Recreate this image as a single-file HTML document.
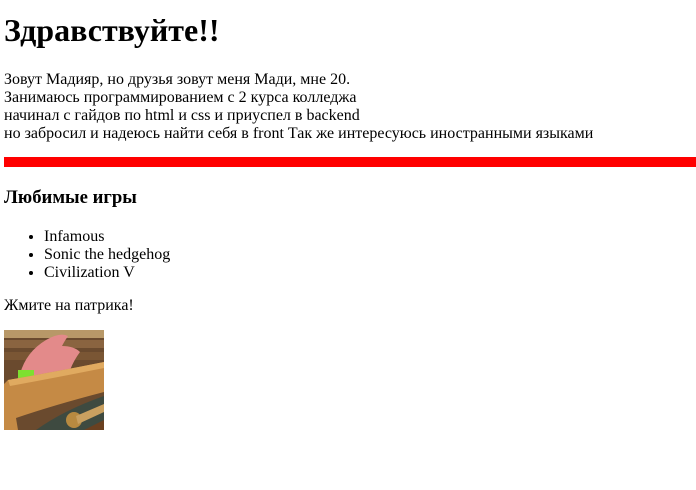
<!DOCTYPE html>
<html><head><meta charset="utf-8"><style>
body{margin:0;width:696px;height:490px;background:#fff;font-family:"Liberation Serif",serif;color:#000;position:relative;overflow:hidden}
.a{position:absolute;left:4px;white-space:nowrap}
p{margin:0}
.t{font-size:16px;line-height:18px}
</style></head><body>
<div class="a" style="top:12px;font-size:32px;font-weight:bold;line-height:37px">Здравствуйте!!</div>
<div class="a t" style="top:71px">Зовут Мадияр, но друзья зовут меня Мади, мне 20.<br>Занимаюсь программированием с 2 курса колледжа<br>начинал с гайдов по html и css и приуспел в backend<br>но забросил и надеюсь найти себя в front Так же интересуюсь иностранными языками</div>
<div style="position:absolute;left:4px;top:157px;width:692px;height:10px;background:#f00"></div>
<div class="a" style="top:187px;font-size:18.7px;font-weight:bold;line-height:22px">Любимые игры</div>
<ul class="a t" style="top:228px;left:4px;margin:0;padding-left:40px">
<li>Infamous</li><li>Sonic the hedgehog</li><li>Civilization V</li></ul>
<div class="a t" style="top:297px">Жмите на патрика!</div>
<svg style="position:absolute;left:4px;top:330px" width="100" height="100" viewBox="0 0 100 100">
<rect width="100" height="100" fill="#6a4a2e"/>
<rect y="0" width="100" height="8" fill="#b89868"/>
<rect y="10" width="100" height="8" fill="#8a6440"/>
<rect y="22" width="100" height="8" fill="#7a5634"/>
<rect y="60" width="8" height="40" fill="#2a1a10"/>
<path d="M16 44 Q22 22 42 10 Q56 2 64 6 Q60 12 58 16 Q70 16 76 22 Q70 30 66 40 L50 46 L18 50Z" fill="#e38a8a"/>
<path d="M14 40 L30 40 L30 48 L14 50Z" fill="#7ee030"/>
<path d="M4 50 Q50 42 100 32 L100 62 Q50 75 12 88 L14 100 L0 100 L0 54Z" fill="#c58a45"/>
<path d="M4 50 Q50 42 100 32 L100 38 Q50 48 6 56Z" fill="#e0aa60"/>
<path d="M32 100 Q60 80 100 66 L100 100Z" fill="#3e4a40"/>
<circle cx="70" cy="90" r="8" fill="#b88a40"/>
<path d="M72 86 L100 74 L100 82 L74 94Z" fill="#c9a060"/>
<path d="M80 100 L100 90 L100 100Z" fill="#6a4020"/>
</svg>
</body></html>
